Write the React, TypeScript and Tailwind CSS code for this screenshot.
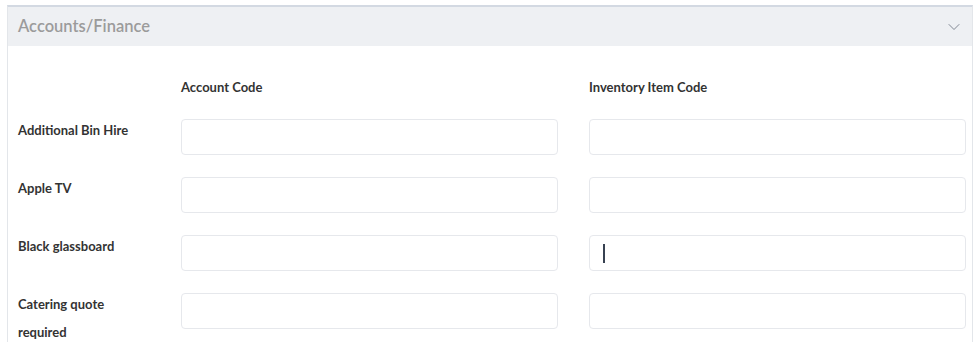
import React from "react";
import { ChevronDown } from "lucide-react";

const items = [
  "Additional Bin Hire",
  "Apple TV",
  "Black glassboard",
  "Catering quote required",
];

const CodeInput: React.FC<{ focused?: boolean }> = ({ focused }) => (
  <div className="relative mt-[3px] h-[36px] rounded-[4px] border border-[#e6e8ec] bg-white">
    {focused && (
      <span className="absolute left-[13px] top-[8px] h-[19px] w-[1.5px] bg-[#374151]" />
    )}
  </div>
);

export default function App() {
  return (
    <div
      className="h-[342px] w-[980px] overflow-hidden bg-white pt-[5px]"
      style={{ fontFamily: "Lato, 'Open Sans', sans-serif" }}
    >
      <div className="mx-[7px] h-full border-x border-t-2 border-[#e3e6ea] border-t-[#d3d9e2]">
        <div className="flex h-[39px] items-center justify-between bg-[#eef0f3] pl-[10px] pr-[8px]">
          <span className="text-[16.5px] font-semibold text-[#9b9b9b]">
            Accounts/Finance
          </span>
          <ChevronDown size={20} strokeWidth={1} className="text-[#6b7280]" />
        </div>

        <div className="grid grid-cols-[132px_377px_377px] gap-x-[31px] pl-[10px] pt-[27px] text-[13px] font-bold text-[#333]">
          <div />
          <div className="leading-[28px]">Account Code</div>
          <div className="leading-[28px]">Inventory Item Code</div>

          {items.map((name, i) => (
            <React.Fragment key={name}>
              <div
                className={
                  (i === 0 ? "mt-[15px] " : "mt-[19px] ") +
                  "h-[39px] w-[118px] leading-[28px]"
                }
              >
                {name}
              </div>
              <div className={i === 0 ? "mt-[15px]" : "mt-[19px]"}>
                <CodeInput />
              </div>
              <div className={i === 0 ? "mt-[15px]" : "mt-[19px]"}>
                <CodeInput focused={i === 2} />
              </div>
            </React.Fragment>
          ))}
        </div>
      </div>
    </div>
  );
}
